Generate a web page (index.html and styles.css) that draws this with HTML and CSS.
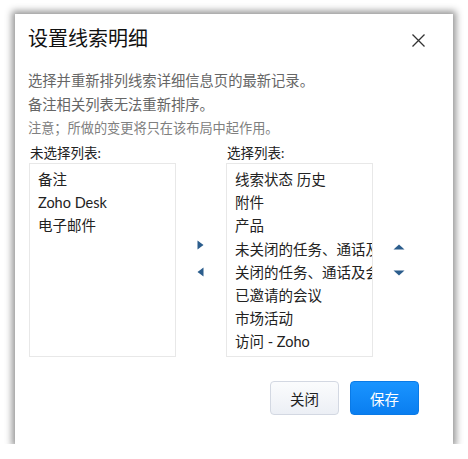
FILE: index.html
```html
<!DOCTYPE html>
<html lang="zh">
<head>
<meta charset="utf-8">
<link rel="stylesheet" href="styles.css">
</head>
<body>
<div class="dialog">
  <div class="header">
    <div class="title">设置线索明细</div>
    <svg class="close" width="13" height="13" viewBox="0 0 13 13"><path d="M0.5 0.5L12.5 12.5M12.5 0.5L0.5 12.5" stroke="#333" stroke-width="1.3" fill="none"/></svg>
  </div>
  <p class="desc">选择并重新排列线索详细信息页的最新记录。</p>
  <p class="desc">备注相关列表无法重新排序。</p>
  <p class="note">注意；所做的变更将只在该布局中起作用。</p>
  <div class="lists">
    <div class="col">
      <div class="label">未选择列表:</div>
      <ul class="box">
        <li>备注</li>
        <li>Zoho Desk</li>
        <li>电子邮件</li>
      </ul>
    </div>
    <div class="arrows lr">
      <svg width="7" height="10" viewBox="0 0 7 10"><path d="M0.5 0.5L6.5 5L0.5 9.5Z" fill="#2b5d8c"/></svg>
      <svg width="7" height="10" viewBox="0 0 7 10"><path d="M6.5 0.5L0.5 5L6.5 9.5Z" fill="#2b5d8c"/></svg>
    </div>
    <div class="col">
      <div class="label">选择列表:</div>
      <ul class="box">
        <li>线索状态 历史</li>
        <li>附件</li>
        <li>产品</li>
        <li>未关闭的任务、通话及会议</li>
        <li>关闭的任务、通话及会议</li>
        <li>已邀请的会议</li>
        <li>市场活动</li>
        <li>访问 - Zoho</li>
      </ul>
    </div>
    <div class="arrows ud">
      <svg width="12" height="6" viewBox="0 0 12 6"><path d="M0.5 5.5L6 0.5L11.5 5.5Z" fill="#2b5d8c"/></svg>
      <svg width="12" height="6" viewBox="0 0 12 6"><path d="M0.5 0.5L6 5.5L11.5 0.5Z" fill="#2b5d8c"/></svg>
    </div>
  </div>
  <div class="footer">
    <button class="btn cancel">关闭</button>
    <button class="btn save">保存</button>
  </div>
</div>
</body>
</html>
```
FILE: styles.css
```css
html, body {
  margin: 0;
  padding: 0;
  background: #fff;
}
body {
  font-family: Lato, "Noto Sans CJK SC", sans-serif;
  color: #222;
}
.dialog {
  margin: 14px 0 0 15px;
  width: 438px;
  height: 430px;
  box-sizing: border-box;
  background: #fff;
  box-shadow: 0 0 7px 3px rgba(0, 0, 0, 0.42);
  padding: 12px 28px 0 13px;
}
.header {
  display: flex;
  justify-content: space-between;
  align-items: flex-start;
}
.title {
  font-size: 20px;
  line-height: 24px;
  color: #111;
}
.close {
  margin-top: 8px;
}
.desc {
  margin: 0;
  font-size: 14.3px;
  line-height: 24px;
  color: #666;
}
.header + .desc {
  margin-top: 19px;
}
.note {
  margin: 0;
  font-size: 13.2px;
  line-height: 22px;
  color: #808080;
}
.lists {
  display: flex;
  margin-top: 4px;
  padding-left: 1px;
}
.col {
  display: flex;
  flex-direction: column;
}
.label {
  font-size: 13.5px;
  line-height: 20px;
  color: #222;
  padding-left: 1px;
}
.box {
  list-style: none;
  margin: 0;
  padding: 4px 0 0 8px;
  width: 147px;
  height: 194px;
  box-sizing: border-box;
  border: 1px solid #e8e8e8;
  overflow: hidden;
}
.box li {
  font-size: 14.5px;
  line-height: 23.2px;
  white-space: nowrap;
  color: #222;
}
.arrows {
  display: flex;
  flex-direction: column;
  align-items: center;
}
.lr {
  width: 52px;
  padding-top: 97px;
  gap: 17px;
}
.lr svg {
  margin-left: -2px;
}
.ud {
  width: 54px;
  padding-top: 101px;
  gap: 20px;
}
.footer {
  display: flex;
  justify-content: flex-end;
  gap: 11px;
  margin-top: 24px;
  padding-right: 6px;
}
.btn {
  width: 69px;
  height: 34px;
  border-radius: 4px;
  font-family: Lato, "Noto Sans CJK SC", sans-serif;
  font-size: 14.5px;
  padding: 0;
}
.cancel {
  background: linear-gradient(#fbfcfd, #eceff5);
  border: 1px solid #d3d8e2;
  color: #222;
}
.save {
  background: linear-gradient(#1a94ff, #0a7ef0);
  border: 1px solid #0a7ae6;
  color: #fff;
}
```
